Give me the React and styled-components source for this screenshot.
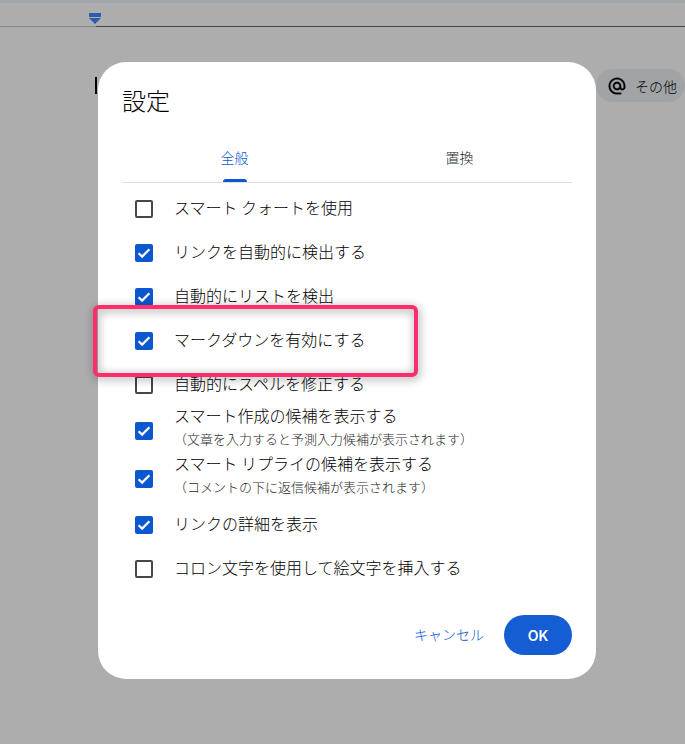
import React, { useState } from "react";
import styled, { createGlobalStyle } from "styled-components";
import { MdAlternateEmail } from "react-icons/md";

const GlobalStyle = createGlobalStyle`
  * {
    box-sizing: border-box;
  }

  body {
    margin: 0;
    background: #ffffff;
    color: #000000;
    font-family: "Noto Sans CJK JP", sans-serif;
    font-weight: 300;
  }

  button,
  input {
    font-family: inherit;
    font-weight: inherit;
  }
`;

const EditorStyled = styled.div`
  min-height: 100vh;

  .toolbar-edge {
    height: 3px;
    background: #edf2fa;
  }
`;

const RulerStyled = styled.div`
  display: flex;
  height: 24px;

  .margin {
    display: flex;
    justify-content: flex-end;
    align-items: flex-start;
    width: 96px;
    padding-top: 10px;
    border-bottom: 1px solid #c4c4c4;
  }

  .marker {
    flex: none;
    margin-right: -5px;
  }

  .scale {
    flex: 1;
    border-bottom: 1px solid #666666;
  }
`;

const DocumentStyled = styled.div`
  display: flex;
  align-items: center;
  justify-content: space-between;
  padding: 42px 0 0 95px;

  .caret {
    width: 2px;
    height: 17px;
    background: #000000;
  }
`;

const Chip = styled.button`
  display: flex;
  align-items: center;
  gap: 8px;
  height: 33px;
  padding: 0 8px 0 11px;
  border: 0;
  border-radius: 17px;
  background: #edf2f7;
  color: #000000;
  font-size: 14px;
  line-height: 20px;

  svg path:last-child {
    stroke: #1f1f1f;
    stroke-width: 0.4px;
  }

  svg path[fill="none"] {
    stroke: none;
  }
`;

const Scrim = styled.div`
  position: fixed;
  inset: 0;
  display: flex;
  align-items: center;
  justify-content: center;
  padding: 0 80px 3px 89px;
  background: rgba(0, 0, 0, 0.32);
`;

const Dialog = styled.div`
  width: 100%;
  max-width: 498px;
  padding: 24px;
  border-radius: 28px;
  background: #ffffff;
`;

const Title = styled.h1`
  margin: 0 0 20px;
  font-size: 24px;
  font-weight: 300;
  line-height: 28px;
`;

const TabList = styled.div`
  display: flex;
  border-bottom: 1px solid #e0e0e0;
`;

const Tab = styled.button`
  display: flex;
  flex: 1;
  flex-direction: column;
  align-items: center;
  height: 48px;
  padding: 2px 0 0;
  border: 0;
  background: none;
  color: ${(props) => (props.$active ? "#0b57d0" : "#1f1f1f")};
  font-size: 14px;
  line-height: 43px;

  &::after {
    content: "";
    width: 24px;
    height: 3px;
    border-radius: 3px 3px 0 0;
    background: ${(props) => (props.$active ? "#0b57d0" : "transparent")};
  }
`;

const Options = styled.div`
  margin: 4px 0 24px;
`;

const OptionRow = styled.label`
  position: relative;
  display: flex;
  align-items: center;
  gap: 21px;
  height: ${(props) => (props.$tall ? "48px" : "44px")};
  padding-left: 13px;
`;

const OptionText = styled.span`
  display: flex;
  flex-direction: column;
  padding-bottom: 4px;
  font-size: 16px;
  line-height: 18px;

  .note {
    margin-bottom: -2px;
    color: #1f1f1f;
    font-size: 13px;
    line-height: 30px;
  }
`;

const CheckboxStyled = styled.span`
  display: grid;
  flex: none;
  width: 18px;
  height: 18px;

  input,
  svg {
    grid-area: 1 / 1;
  }

  input {
    width: 18px;
    height: 18px;
    margin: 0;
    appearance: none;
    border: 2px solid #444746;
    border-radius: 2px;

    &:checked {
      border-color: #0b57d0;
      background: #0b57d0;
    }
  }

  svg {
    pointer-events: none;
  }
`;

// Frame drawn over the option it points at
const Highlight = styled.span`
  position: absolute;
  z-index: 1;
  top: -14px;
  bottom: -14px;
  left: -29px;
  width: 325px;
  border: 4px solid #ff2d6b;
  border-radius: 6px;
  filter: drop-shadow(1px 2px 5px rgba(0, 0, 0, 0.45));
  pointer-events: none;
`;

const Actions = styled.div`
  display: flex;
  justify-content: flex-end;
  gap: 8px;
`;

const ActionButton = styled.button`
  min-width: 68px;
  height: 40px;
  padding: ${(props) => (props.$primary ? "0 20px" : "0 12px 2px")};
  border: 0;
  border-radius: 20px;
  background: ${(props) => (props.$primary ? "#145dd3" : "transparent")};
  color: ${(props) => (props.$primary ? "#ffffff" : "#0b57d0")};
  font-size: 14px;
  ${(props) =>
    props.$primary && `font-family: Inter, sans-serif; font-weight: 600;`}
`;

const options = [
  { id: "quotes", label: "スマート クォートを使用", checked: false },
  { id: "links", label: "リンクを自動的に検出する", checked: true },
  { id: "lists", label: "自動的にリストを検出", checked: true },
  {
    id: "markdown",
    label: "マークダウンを有効にする",
    checked: true,
    highlight: true,
  },
  { id: "spelling", label: "自動的にスペルを修正する", checked: false },
  {
    id: "compose",
    label: "スマート作成の候補を表示する",
    note: "（文章を入力すると予測入力候補が表示されます）",
    checked: true,
  },
  {
    id: "reply",
    label: "スマート リプライの候補を表示する",
    note: "（コメントの下に返信候補が表示されます）",
    checked: true,
  },
  { id: "details", label: "リンクの詳細を表示", checked: true },
  {
    id: "emoji",
    label: "コロン文字を使用して絵文字を挿入する",
    checked: false,
  },
];

const Checkbox = ({ id, defaultChecked }) => {
  const [checked, setChecked] = useState(defaultChecked);

  return (
    <CheckboxStyled>
      <input
        id={id}
        type="checkbox"
        checked={checked}
        onChange={(e) => setChecked(e.target.checked)}
      />
      {checked && (
        <svg width="18" height="18" viewBox="0 0 18 18" aria-hidden="true">
          <path
            d="M3.6 9.2 7.1 12.6 14.4 5.3"
            fill="none"
            stroke="#ffffff"
            strokeWidth="2.2"
          />
        </svg>
      )}
    </CheckboxStyled>
  );
};

const Editor = () => (
  <EditorStyled>
    <div className="toolbar-edge" />
    <RulerStyled>
      <div className="margin">
        <svg className="marker" width="12" height="11" viewBox="0 0 12 11">
          <path d="M0 0h12v4H0zM0 5h12L6 11z" fill="#4688ff" />
        </svg>
      </div>
      <div className="scale" />
    </RulerStyled>
    <DocumentStyled>
      <span className="caret" />
      <Chip type="button">
        <MdAlternateEmail size={20} strokeWidth={0} aria-hidden="true" />
        その他
      </Chip>
    </DocumentStyled>
  </EditorStyled>
);

const App = () => {
  const [tab, setTab] = useState("全般");

  return (
    <>
      <GlobalStyle />
      <Editor />
      <Scrim>
        <Dialog role="dialog" aria-labelledby="settings-title">
          <Title id="settings-title">設定</Title>
          <TabList role="tablist">
            {["全般", "置換"].map((name) => (
              <Tab
                key={name}
                type="button"
                role="tab"
                aria-selected={tab === name}
                $active={tab === name}
                onClick={() => setTab(name)}
              >
                {name}
              </Tab>
            ))}
          </TabList>
          <Options>
            {options.map(({ id, label, note, checked, highlight }) => (
              <OptionRow key={id} htmlFor={id} $tall={Boolean(note)}>
                <Checkbox id={id} defaultChecked={checked} />
                <OptionText>
                  {label}
                  {note && <span className="note">{note}</span>}
                </OptionText>
                {highlight && <Highlight />}
              </OptionRow>
            ))}
          </Options>
          <Actions>
            <ActionButton type="button">キャンセル</ActionButton>
            <ActionButton type="button" $primary>
              OK
            </ActionButton>
          </Actions>
        </Dialog>
      </Scrim>
    </>
  );
};

export default App;
